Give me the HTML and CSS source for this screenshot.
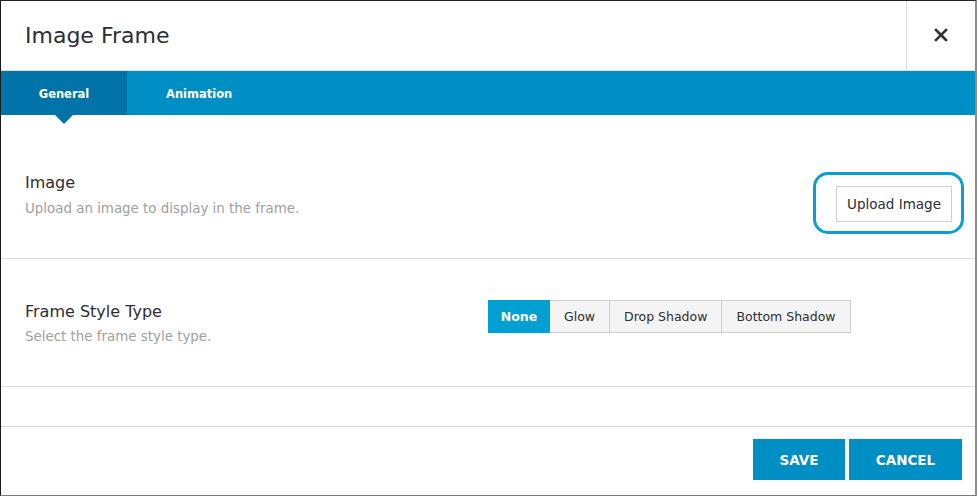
FILE: index.html
```html
<!DOCTYPE html>
<html>
<head>
<meta charset="utf-8">
<link rel="stylesheet" href="styles.css">
</head>
<body>
<div class="modal">
  <header class="modal-header">
    <h1 class="modal-title">Image Frame</h1>
    <button class="close-btn" aria-label="Close">
      <svg width="14" height="14" viewBox="0 0 14 14"><path d="M2 2L12 12M12 2L2 12" stroke="#333" stroke-width="2.6" stroke-linecap="square"/></svg>
    </button>
  </header>
  <nav class="tabs">
    <div class="tab active">General</div>
    <div class="tab">Animation</div>
  </nav>
  <section class="row row-image">
    <div class="label">
      <div class="label-title">Image</div>
      <div class="label-desc">Upload an image to display in the frame.</div>
    </div>
    <div class="control control-end">
      <div class="focus-ring"><button class="upload-btn">Upload Image</button></div>
    </div>
  </section>
  <section class="row row-style">
    <div class="label">
      <div class="label-title">Frame Style Type</div>
      <div class="label-desc">Select the frame style type.</div>
    </div>
    <div class="control">
      <div class="seg">
        <button class="seg-btn selected">None</button>
        <button class="seg-btn">Glow</button>
        <button class="seg-btn">Drop Shadow</button>
        <button class="seg-btn">Bottom Shadow</button>
      </div>
    </div>
  </section>
  <section class="row-empty"></section>
  <footer class="modal-footer">
    <button class="action-btn save">SAVE</button>
    <button class="action-btn cancel">CANCEL</button>
  </footer>
</div>
</body>
</html>
```
FILE: styles.css
```css
html, body {
  margin: 0;
  padding: 0;
  background: #fff;
}
body {
  font-family: "DejaVu Sans", "Liberation Sans", sans-serif;
  color: #333;
}
.modal {
  box-sizing: border-box;
  width: 977px;
  height: 496px;
  border-left: 1px solid #1c1c1c;
  border-top: 1px solid #1f2326;
  border-right: 2px solid #8c8c8c;
  border-bottom: 1px solid #7a7a7a;
  display: flex;
  flex-direction: column;
  background: #fff;
}
.modal-header {
  height: 69px;
  border-bottom: 1px solid #dcdcdc;
  display: flex;
  align-items: stretch;
}
.modal-title {
  flex: 1;
  margin: 0;
  padding-left: 24px;
  font-size: 22px;
  font-weight: normal;
  color: #2b2e33;
  display: flex;
  align-items: center;
  line-height: 1;
  padding-top: 1px;
}
.close-btn {
  width: 69px;
  border: 0;
  border-left: 1px solid #dcdcdc;
  background: #fff;
  display: flex;
  align-items: center;
  justify-content: center;
  padding: 0;
  padding-bottom: 2px;
}
.tabs {
  height: 44px;
  background: #008fc5;
  display: flex;
}
.tab {
  position: relative;
  padding: 1px 38px 0;
  color: #fff;
  font-weight: bold;
  font-size: 11.5px;
  display: flex;
  align-items: center;
}
.tab.active {
  background: #0074a8;
  width: 126px;
  box-sizing: border-box;
  justify-content: center;
  padding: 1px 0 0;
}
.tab.active + .tab {
  padding-left: 39px;
}
.tab.active::after {
  content: "";
  position: absolute;
  left: 50%;
  top: 100%;
  margin-left: -9px;
  border-left: 9px solid transparent;
  border-right: 9px solid transparent;
  border-top: 9px solid #0074a8;
}
.row {
  display: grid;
  grid-template-columns: 463px 1fr;
  border-bottom: 1px solid #dedede;
  padding: 0 24px;
}
.row-image {
  height: 144px;
  box-sizing: border-box;
  padding-top: 58px;
}
.row-style {
  height: 128px;
  box-sizing: border-box;
  padding-top: 43px;
}
.label-title {
  font-size: 16px;
  line-height: 20px;
  color: #2b2e33;
}
.label-desc {
  font-size: 13.4px;
  line-height: 20px;
  margin-top: 6px;
  color: #a0a0a0;
}
.row-style .label-desc {
  margin-top: 5px;
}
.control-end {
  display: flex;
  justify-content: flex-end;
}
.focus-ring {
  box-sizing: border-box;
  width: 151px;
  height: 62px;
  border: 3px solid #0a9fd0;
  border-radius: 15px;
  display: flex;
  align-items: center;
  justify-content: flex-end;
  padding-right: 9px;
  padding-top: 1px;
  margin-right: -13px;
  margin-top: -1px;
}
.upload-btn {
  box-sizing: border-box;
  width: 116px;
  height: 36px;
  border: 1px solid #cfcfcf;
  background: #fff;
  font-family: "DejaVu Sans", "Liberation Sans", sans-serif;
  font-size: 13.5px;
  color: #2b2e33;
  padding: 0;
}
.seg {
  display: flex;
  height: 33px;
  margin-top: -2px;
}
.seg-btn {
  box-sizing: border-box;
  height: 33px;
  border: 1px solid #cfcfcf;
  border-left: 0;
  background: #f4f4f4;
  font-family: "DejaVu Sans", "Liberation Sans", sans-serif;
  font-size: 12.5px;
  color: #2b2e33;
  padding: 0 14px;
}
.seg-btn:first-child {
  border-left: 1px solid #cfcfcf;
}
.seg-btn.selected {
  background: #00a0d2;
  border-color: #00a0d2;
  color: #fff;
  font-weight: bold;
  width: 62px;
  padding: 0;
}
.row-empty {
  height: 39px;
  border-bottom: 1px solid #d4d4d4;
}
.modal-footer {
  flex: 1;
  display: flex;
  justify-content: flex-end;
  align-items: flex-start;
  padding: 12px 13px 0 0;
  gap: 4px;
}
.action-btn {
  height: 41px;
  border: 0;
  background: #008fc5;
  color: #fff;
  font-family: "DejaVu Sans", "Liberation Sans", sans-serif;
  font-weight: bold;
  font-size: 13.5px;
  padding: 0;
}
.save { width: 92px; }
.cancel { width: 113px; }
```
